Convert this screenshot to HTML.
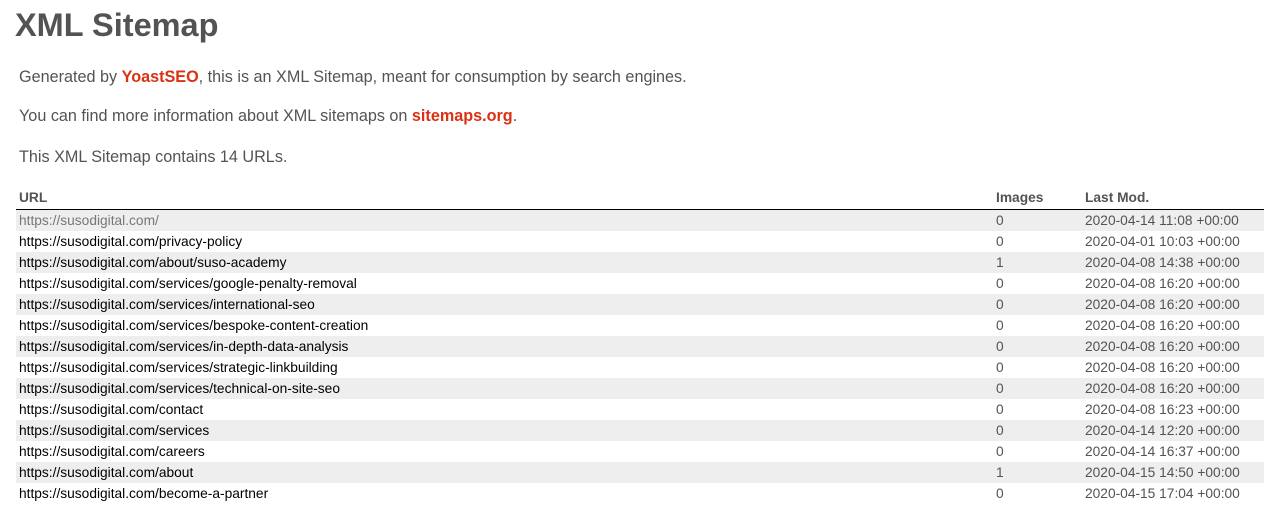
<!DOCTYPE html>
<html><head><meta charset="utf-8"><style>
body{margin:0;font-family:"Liberation Sans",Arial,sans-serif;color:#545353;background:#fff;}
h1{position:absolute;left:15px;top:5px;margin:0;font-size:32.5px;font-weight:bold;line-height:40px;color:#545353;}
.p{position:absolute;left:19px;margin:0;font-size:16.2px;line-height:20px;}
.p a{color:#da3114;font-weight:bold;text-decoration:none;}
table{position:absolute;left:16px;top:188px;width:1248px;border-collapse:collapse;}
th{text-align:left;font-size:13.75px;font-weight:bold;height:21px;padding:0 0 0 3px;border-bottom:1px solid #000;color:#545353;line-height:19px;vertical-align:top;}
td{font-size:13.75px;height:21px;padding:0 0 0 3px;color:#545353;line-height:21px;}
td a{color:#000;text-decoration:none;}
tbody tr:nth-child(odd) td{background:#eee;}
tbody tr:first-child td a{color:#777;}
</style></head><body>
<h1>XML Sitemap</h1>
<p class="p" style="top:67px">Generated by <a>YoastSEO</a>, this is an XML Sitemap, meant for consumption by search engines.</p>
<p class="p" style="top:106px">You can find more information about XML sitemaps on <a>sitemaps.org</a>.</p>
<p class="p" style="top:147px">This XML Sitemap contains 14 URLs.</p>
<table>
<colgroup><col style="width:977px"><col style="width:89px"><col></colgroup>
<thead><tr><th>URL</th><th>Images</th><th>Last Mod.</th></tr></thead>
<tbody>
<tr><td><a>https://susodigital.com/</a></td><td>0</td><td>2020-04-14 11:08 +00:00</td></tr>
<tr><td><a>https://susodigital.com/privacy-policy</a></td><td>0</td><td>2020-04-01 10:03 +00:00</td></tr>
<tr><td><a>https://susodigital.com/about/suso-academy</a></td><td>1</td><td>2020-04-08 14:38 +00:00</td></tr>
<tr><td><a>https://susodigital.com/services/google-penalty-removal</a></td><td>0</td><td>2020-04-08 16:20 +00:00</td></tr>
<tr><td><a>https://susodigital.com/services/international-seo</a></td><td>0</td><td>2020-04-08 16:20 +00:00</td></tr>
<tr><td><a>https://susodigital.com/services/bespoke-content-creation</a></td><td>0</td><td>2020-04-08 16:20 +00:00</td></tr>
<tr><td><a>https://susodigital.com/services/in-depth-data-analysis</a></td><td>0</td><td>2020-04-08 16:20 +00:00</td></tr>
<tr><td><a>https://susodigital.com/services/strategic-linkbuilding</a></td><td>0</td><td>2020-04-08 16:20 +00:00</td></tr>
<tr><td><a>https://susodigital.com/services/technical-on-site-seo</a></td><td>0</td><td>2020-04-08 16:20 +00:00</td></tr>
<tr><td><a>https://susodigital.com/contact</a></td><td>0</td><td>2020-04-08 16:23 +00:00</td></tr>
<tr><td><a>https://susodigital.com/services</a></td><td>0</td><td>2020-04-14 12:20 +00:00</td></tr>
<tr><td><a>https://susodigital.com/careers</a></td><td>0</td><td>2020-04-14 16:37 +00:00</td></tr>
<tr><td><a>https://susodigital.com/about</a></td><td>1</td><td>2020-04-15 14:50 +00:00</td></tr>
<tr><td><a>https://susodigital.com/become-a-partner</a></td><td>0</td><td>2020-04-15 17:04 +00:00</td></tr>
</tbody></table>
</body></html>
